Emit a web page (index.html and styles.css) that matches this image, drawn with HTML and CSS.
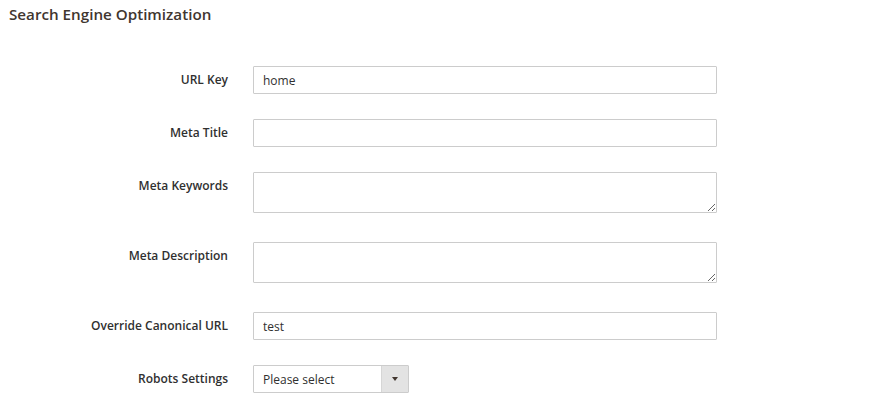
FILE: index.html
```html
<!DOCTYPE html>
<html lang="en">
<head>
<meta charset="utf-8">
<title>Search Engine Optimization</title>
<link rel="stylesheet" href="styles.css">
</head>
<body>
<section class="fieldset">
  <h2 class="fieldset-title">Search Engine Optimization</h2>
  <form class="form">
    <div class="row">
      <label class="label" for="url-key">URL Key</label>
      <input class="control input" id="url-key" type="text" value="home">
    </div>
    <div class="row">
      <label class="label" for="meta-title">Meta Title</label>
      <input class="control input" id="meta-title" type="text" value="">
    </div>
    <div class="row row-area">
      <label class="label" for="meta-keywords">Meta Keywords</label>
      <textarea class="control textarea" id="meta-keywords"></textarea>
    </div>
    <div class="row row-area">
      <label class="label" for="meta-description">Meta Description</label>
      <textarea class="control textarea" id="meta-description"></textarea>
    </div>
    <div class="row">
      <label class="label" for="canonical">Override Canonical URL</label>
      <input class="control input" id="canonical" type="text" value="test">
    </div>
    <div class="row">
      <label class="label" for="robots">Robots Settings</label>
      <div class="select-wrap">
        <select class="select" id="robots">
          <option>Please select</option>
          <option>INDEX, FOLLOW</option>
          <option>NOINDEX, FOLLOW</option>
          <option>INDEX, NOFOLLOW</option>
          <option>NOINDEX, NOFOLLOW</option>
        </select>
      </div>
    </div>
  </form>
</section>
</body>
</html>
```
FILE: styles.css
```css
* { box-sizing: border-box; }

html, body {
  margin: 0;
  padding: 0;
  background: #ffffff;
}

body {
  font-family: "Open Sans", "Noto Sans", "Liberation Sans", sans-serif;
  color: #303030;
}

.fieldset {
  padding: 4px 0 0 9px;
}

.fieldset-title {
  margin: 0;
  font-size: 15.2px;
  line-height: 20px;
  font-weight: 600;
  color: #41362f;
}

.form {
  margin-top: 42px;
  margin-left: -9px;
}

.row {
  display: flex;
  align-items: flex-start;
  gap: 25px;
  margin-bottom: 25px;
}

.row-area {
  margin-bottom: 29px;
}

.label {
  flex: 0 0 228px;
  text-align: right;
  font-size: 12px;
  line-height: 28px;
  font-weight: 600;
  color: #303030;
}

.control {
  width: 464px;
  border: 1px solid #cccccc;
  border-radius: 1px;
  background: #ffffff;
  font-family: inherit;
  font-size: 12px;
  color: #303030;
  outline: none;
  margin: 0;
}

.input {
  height: 28px;
  padding: 0 9px;
}

.textarea {
  display: block;
  height: 41px;
  padding: 5px 9px;
}

.select-wrap {
  position: relative;
  width: 156px;
  height: 28px;
}

.select {
  -webkit-appearance: none;
  appearance: none;
  display: block;
  width: 156px;
  height: 28px;
  margin: 0;
  padding: 0 36px 0 9px;
  border: 1px solid #cccccc;
  border-radius: 1px;
  font-family: inherit;
  font-size: 12px;
  color: #303030;
  outline: none;
  background: linear-gradient(to right, #ffffff 0, #ffffff 127px, #d6d6d6 127px, #d6d6d6 128px, #e3e3e3 128px);
}

.select-wrap::after {
  content: "";
  position: absolute;
  top: 12px;
  left: 139px;
  width: 0;
  height: 0;
  border-left: 3px solid transparent;
  border-right: 3px solid transparent;
  border-top: 4px solid #41362f;
  pointer-events: none;
}
```
